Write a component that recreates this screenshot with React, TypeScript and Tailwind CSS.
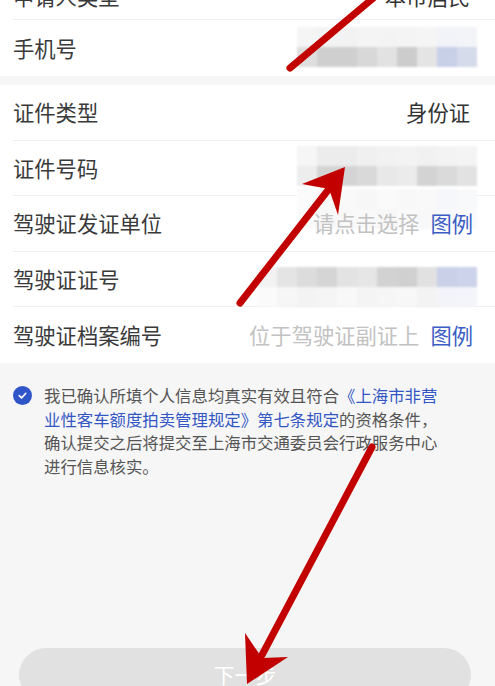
import React from 'react';

type MosaicProps = {
  rows: string[][];
  className?: string;
};

// pixelated blur that hides personal data
function Mosaic({ rows, className = '' }: MosaicProps) {
  return (
    <div className={`flex flex-col blur-[0.8px] ${className}`}>
      {rows.map((row, i) => (
        <div key={i} className="flex">
          {row.map((c, j) => (
            <div key={j} className="w-[20px] h-[20px]" style={{ backgroundColor: c }} />
          ))}
        </div>
      ))}
    </div>
  );
}

function Row({
  label,
  children,
  last = false,
  className = '',
}: {
  label: string;
  children?: React.ReactNode;
  last?: boolean;
  className?: string;
}) {
  return (
    <div className="pl-[13px]">
      <div
        className={`flex items-center justify-between pr-[25px] ${
          last ? 'h-[56px]' : 'h-[55.5px] border-b border-[#efefef]'
        } ${className}`}
      >
        <span className="text-[21.3px] text-[#3a3a3a] whitespace-nowrap">{label}</span>
        {children}
      </div>
    </div>
  );
}

const phoneRows = [
  ['#f5f5f5', '#f3f3f3', '#f2f2f2', '#f4f4f4', '#f3f3f3', '#f4f4f4', '#f5f5f5', '#f1f3f8', '#f3f4f8'],
  ['#dedede', '#cfcfcf', '#cfcfcf', '#d8d8d8', '#e2e2e2', '#cccccc', '#e4e4e4', '#c8d0e8', '#d5dbea'],
];

const idRows = [
  ['#f6f6f6', '#ececec', '#ececec', '#f0f0f0', '#f2f2f2', '#f3f3f3', '#f1f1f1', '#f3f3f3', '#f4f4f4'],
  ['#ededed', '#d4d4d4', '#d4d4d4', '#d9d9d9', '#e8e8e8', '#ebebeb', '#d3d3d3', '#dadada', '#e2e2e2'],
];

const licenseRows = [
  ['#f2f2f2', '#e4e4e4', '#dcdcdc', '#d5d5d5', '#e3e3e3', '#e6e6e6', '#d2d2d2', '#d0d0d0', '#e1e1e1', '#c9d0e8', '#ccd3ea'],
  ['#fafafa', '#f6f6f6', '#f3f3f3', '#f5f5f5', '#f8f8f8', '#f4f4f4', '#f6f6f6', '#f7f7f7', '#f3f3f3', '#f2f4f9', '#f4f5fa'],
];

const faintRows = [
  ['#fbfbfb', '#f8f8f8', '#f9f9f9', '#f7f7f7', '#fafafa', '#f8f8f8', '#f9f9f9', '#f6f7fa', '#f8f9fb'],
  ['#fafafa', '#f7f7f7', '#f8f8f8', '#f9f9f9', '#f7f7f7', '#fafafa', '#f8f8f8', '#f7f8fb', '#f9f9fb'],
];

function Arrows() {
  const red = '#c20000';
  return (
    <svg className="absolute inset-0 pointer-events-none" width="495" height="686" viewBox="0 0 495 686">
      {/* arrow 1, head off screen */}
      <line x1="290" y1="68" x2="390" y2="-16" stroke={red} strokeWidth="7" strokeLinecap="round" />
      {/* arrow 2 */}
      <line x1="240" y1="303" x2="332" y2="185" stroke={red} strokeWidth="7" strokeLinecap="round" />
      <polygon points="345,167 302,184 329,189 338,215" fill={red} />
      {/* arrow 3 */}
      <line x1="372" y1="447" x2="262" y2="655" stroke={red} strokeWidth="7" strokeLinecap="round" />
      <polygon points="247,684 245,633 262,658 288,657" fill={red} />
    </svg>
  );
}

export default function App() {
  return (
    <div className="relative h-[686px] overflow-hidden bg-[#f6f6f6] font-['Noto_Sans_CJK_SC','Noto_Sans',sans-serif]">
      <div className="-mt-[36px] bg-white">
        <Row label="申请人类型" className="pt-[10px]">
          <span className="text-[21.3px] text-[#333]">本市居民</span>
        </Row>
        <Row label="手机号" last>
          <Mosaic rows={phoneRows} className="-mr-[7px] mt-[-2px]" />
        </Row>
      </div>

      <div className="mt-[9.5px] bg-white">
        <Row label="证件类型">
          <span className="text-[21.3px] text-[#333]">身份证</span>
        </Row>
        <Row label="证件号码">
          <Mosaic rows={idRows} className="-mr-[7px] -mt-[4px]" />
        </Row>
        <Row label="驾驶证发证单位">
          <div className="relative -mr-[3px] flex items-center">
            <Mosaic rows={faintRows} className="absolute -right-[4px] -top-[18px]" />
            <span className="relative text-[21.3px] text-[#c2c2c2]">请点击选择</span>
            <span className="relative ml-[11px] text-[21.3px] text-[#3b5cc4]">图例</span>
          </div>
        </Row>
        <Row label="驾驶证证号">
          <Mosaic rows={licenseRows} className="-mr-[7px] mt-[16px]" />
        </Row>
        <Row label="驾驶证档案编号" last>
          <div className="-mr-[3px] flex items-center">
            <span className="text-[21.3px] text-[#c2c2c2] whitespace-nowrap">位于驾驶证副证上</span>
            <span className="ml-[11px] text-[21.3px] text-[#3b5cc4]">图例</span>
          </div>
        </Row>
      </div>

      <div className="flex items-start pl-[13px] pt-[21px]">
        <div className="mt-[2px] flex h-[19px] w-[19px] shrink-0 items-center justify-center rounded-full bg-[#2f55c9]">
          <svg width="11" height="11" viewBox="0 0 12 12">
            <path d="M2.5 6.2 L5 8.6 L9.6 3.6" fill="none" stroke="white" strokeWidth="1.8" strokeLinecap="round" strokeLinejoin="round" />
          </svg>
        </div>
        <p className="ml-[12px] w-[396px] text-[16.4px] leading-[23.5px] text-[#555]">
          我已确认所填个人信息均真实有效且符合
          <span className="text-[#3356c4]">《上海市非营业性客车额度拍卖管理规定》第七条规定</span>
          的资格条件，确认提交之后将提交至上海市交通委员会行政服务中心进行信息核实。
        </p>
      </div>

      <div className="pl-[19px] pr-[24px] mt-[170px]">
        <button className="flex h-[54px] w-full items-center justify-center rounded-full bg-[#e1e1e1] text-[21px] text-white">
          下一步
        </button>
      </div>

      <Arrows />
    </div>
  );
}
